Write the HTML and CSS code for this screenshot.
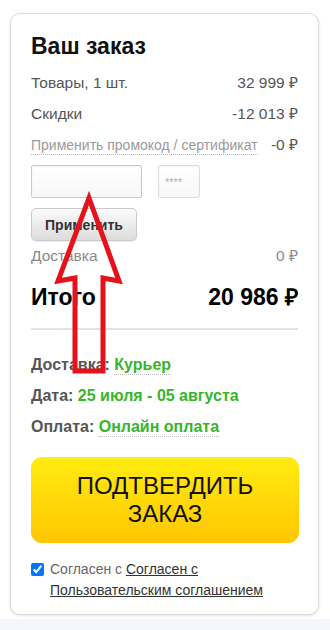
FILE: index.html
```html
<!DOCTYPE html>
<html lang="ru">
<head>
<meta charset="utf-8">
<title>Ваш заказ</title>
<link rel="stylesheet" href="styles.css">
</head>
<body>
<div class="page">
  <div class="card">
    <h2 class="title">Ваш заказ</h2>
    <div class="row"><span>Товары, 1 шт.</span><span>32 999 ₽</span></div>
    <div class="row"><span>Скидки</span><span>-12 013 ₽</span></div>
    <div class="row promo"><span class="promo-link">Применить промокод / сертификат</span><span>-0 ₽</span></div>
    <div class="inputs">
      <input class="field field-code" type="text">
      <input class="field field-pin" type="text" placeholder="****">
    </div>
    <button class="apply" type="button">Применить</button>
    <div class="row delivery"><span>Доставка</span><span>0 ₽</span></div>
    <div class="row total"><span>Итого</span><span>20 986 ₽</span></div>
    <div class="divider"></div>
    <div class="info">
      <div class="info-row">Доставка: <span class="val dotted">Курьер</span></div>
      <div class="info-row">Дата: <span class="val">25 июля - 05 августа</span></div>
      <div class="info-row">Оплата: <span class="val dotted">Онлайн оплата</span></div>
    </div>
    <button class="confirm" type="button">ПОДТВЕРДИТЬ<br>ЗАКАЗ</button>
    <label class="agree">
      <input class="check" type="checkbox" checked>
      <span class="agree-text">Согласен с <a class="agree-link" href="#">Согласен с Пользовательским соглашением</a></span>
    </label>
  </div>
  <div class="strip"></div>
  <svg class="arrow" width="330" height="630" viewBox="0 0 330 630">
    <polygon points="89,198 119,281 103,278 103,371 75,371 75,278 58,281" fill="none" stroke="#e5121c" stroke-width="5" stroke-linejoin="miter"/>
  </svg>
</div>
</body>
</html>
```

FILE: styles.css
```css
* { box-sizing: border-box; }
html, body { margin: 0; padding: 0; }
body {
  background: #ffffff;
  font-family: "Liberation Sans", Arial, sans-serif;
  color: #555;
}
.page {
  position: relative;
  width: 330px;
  height: 630px;
  overflow: hidden;
  padding-top: 13px;
}
.card {
  margin: 0 11px 0 10px;
  border: 1px solid #dcdcdc;
  border-radius: 10px;
  box-shadow: 0 1px 3px rgba(0,0,0,0.12);
  padding: 19px 19px 13px 20px;
  background: #fff;
}
.title {
  margin: 0;
  font-size: 23px;
  line-height: 26px;
  font-weight: bold;
  color: #111;
}
.row {
  display: flex;
  justify-content: space-between;
  align-items: baseline;
  font-size: 15.5px;
  line-height: 31px;
  color: #555;
  padding-right: 1px;
  white-space: nowrap;
}
.title + .row { margin-top: 8px; }
.promo-link {
  font-size: 14px;
  color: #9a9a9a;
  line-height: 17px;
  border-bottom: 1px dotted #b5b5b5;
}
.inputs {
  display: flex;
  gap: 16px;
  margin-top: 5px;
}
.field {
  height: 33px;
  border: 1px solid #c9c9c9;
  border-radius: 2px;
  background: linear-gradient(#ffffff, #f7f7f7);
  box-shadow: inset 0 1px 2px rgba(0,0,0,0.06);
  padding: 0 6px;
  font-family: "Liberation Sans", Arial, sans-serif;
  font-size: 11px;
  outline: none;
}
.field-code { width: 111px; }
.field-pin { width: 42px; border-color: #dedede; }
.field::placeholder { color: #b0b0b0; }
.apply {
  display: block;
  margin-top: 10px;
  width: 106px;
  height: 33px;
  border: 1px solid #cacaca;
  border-radius: 5px;
  background: linear-gradient(#fbfbfb, #dcdcdc);
  box-shadow: 0 1px 1px rgba(0,0,0,0.08);
  font-family: "Liberation Sans", Arial, sans-serif;
  font-weight: bold;
  font-size: 14px;
  color: #333;
  padding: 0;
}
.delivery {
  margin-top: 2px;
  line-height: 26px;
  color: #8a8a8a;
}
.total {
  margin-top: 13px;
  font-size: 23px;
  line-height: 30px;
  font-weight: bold;
  color: #000;
}
.divider {
  margin-top: 16px;
  height: 2px;
  background: #e2e2e2;
  margin-right: 1px;
}
.info { margin-top: 19px; }
.info-row {
  font-size: 16px;
  line-height: 31px;
  font-weight: bold;
  color: #555;
}
.val { color: #36b52a; }
.dotted { border-bottom: 1px dotted #bdbdbd; padding-bottom: 1px; }
.confirm {
  display: block;
  width: 100%;
  margin-top: 15px;
  height: 86px;
  border: none;
  border-radius: 11px;
  background: linear-gradient(#ffec10, #ffc600);
  font-family: "Liberation Sans", Arial, sans-serif;
  font-size: 24px;
  line-height: 28px;
  color: #111;
  padding: 0;
}
.agree {
  display: flex;
  align-items: flex-start;
  margin-top: 16px;
  font-size: 14px;
  line-height: 21px;
}
.check {
  width: 13px;
  height: 13px;
  margin: 4px 6px 0 0;
  flex: none;
}
.agree-text { color: #666; }
.agree-link { color: #333; text-decoration: underline; }
.strip {
  margin-top: 4px;
  height: 12px;
  background: #f4f6fb;
}
.arrow {
  position: absolute;
  left: 0;
  top: 0;
  pointer-events: none;
}
```
